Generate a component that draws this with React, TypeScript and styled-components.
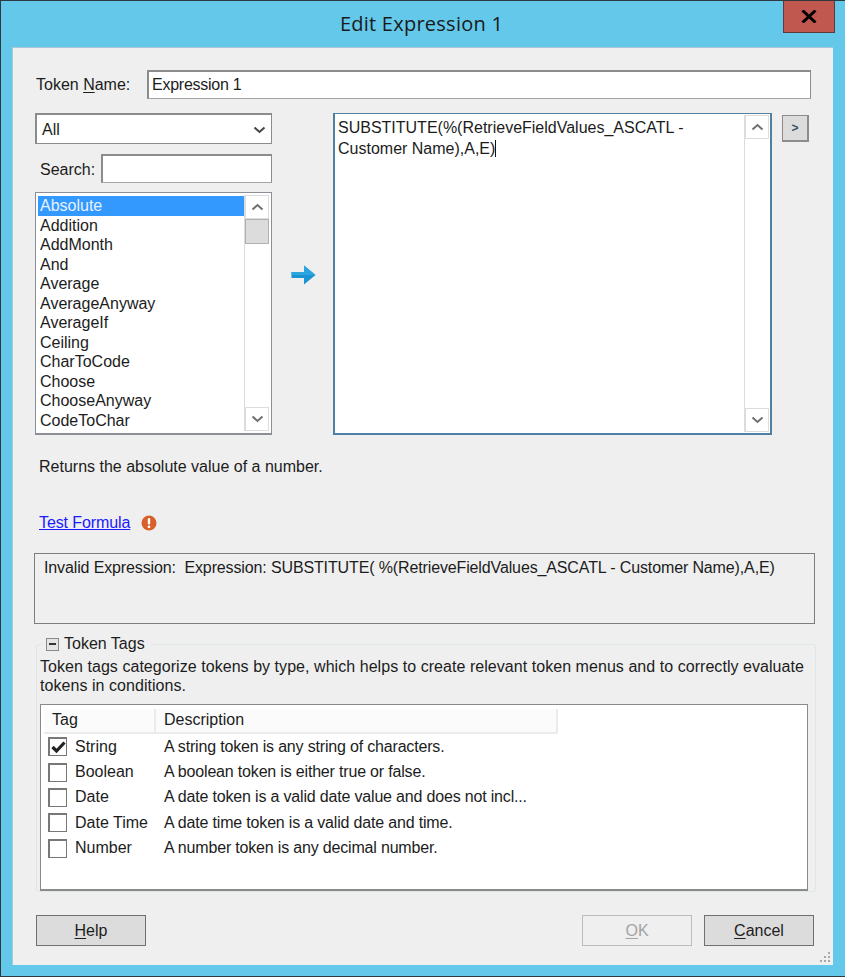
import styled, { createGlobalStyle } from 'styled-components'

const GlobalStyle = createGlobalStyle`
  html, body {
    margin: 0;
    padding: 0;
    background: #63c8ea;
  }
  * {
    box-sizing: border-box;
  }
`

const Window = styled.div`
  width: 845px;
  height: 977px;
  position: relative;
  display: flex;
  flex-direction: column;
  background: #63c8ea;
  border: 1px solid #2f3a40;
  border-right: none;
  font-family: "Liberation Sans", Arial, sans-serif;
  font-size: 16px;
  color: #1c1c1c;
`

const TitleBar = styled.div`
  height: 46px;
  flex: none;
  display: flex;
  align-items: flex-start;
  justify-content: center;
  padding: 9px 3px 0 0;
  font-family: "Open Sans", "Noto Sans", sans-serif;
  font-size: 20px;
  letter-spacing: 0.25px;
  line-height: 28px;
  color: #1a1a1a;
`

const CloseButton = styled.div`
  position: absolute;
  top: 0;
  left: 782px;
  width: 52px;
  height: 32px;
  display: flex;
  align-items: center;
  justify-content: center;
  background: #c0584f;
  border: 1px solid #5f3a38;
  border-top: none;
`

const Client = styled.div`
  flex: none;
  width: 821px;
  height: 918px;
  margin-left: 11px;
  padding: 22px 19px 0 23px;
  background: #efefef;
  border-top: 1px solid #a9c9d6;
  border-left: 1px solid #a9c9d6;
  position: relative;
`

const NameRow = styled.div`
  display: flex;
  align-items: center;
  justify-content: space-between;
  height: 29px;
  padding-right: 3px;
`

const Label = styled.label`
  line-height: 20px;
`

const SearchLabel = styled(Label)`
  margin-top: 2px;
`

const Key = styled.span`
  text-decoration: underline;
  text-underline-offset: 2px;
`

const TextField = styled.div<{ $width: number }>`
  width: ${p => p.$width}px;
  height: 29px;
  padding: 0 3px;
  display: flex;
  align-items: center;
  background: #fff;
  border: 2px solid #8c8c8c;
  border-right-width: 1px;
  border-bottom: 1px solid #a5a5a5;
  letter-spacing: -0.25px;
  white-space: nowrap;
`

const Columns = styled.div`
  display: flex;
  margin-top: 14px;
  margin-left: -1px;
  height: 322px;
`

const LeftColumn = styled.div`
  width: 237px;
  flex: none;
  display: flex;
  flex-direction: column;
`

const Combo = styled.div`
  height: 31px;
  padding: 2px 5px 0;
  display: flex;
  align-items: center;
  justify-content: space-between;
  background: #fff;
  border: 2px solid #8c8c8c;
  border-right-width: 1px;
  border-bottom-width: 1px;
`

const SearchRow = styled.div`
  display: flex;
  align-items: center;
  justify-content: space-between;
  height: 29px;
  margin-top: 10px;
  padding-left: 5px;
`

const ListBox = styled.div`
  display: flex;
  height: 243px;
  margin-top: 9px;
  padding: 2px;
  background: #fff;
  border: 1px solid #8c9096;
  border-bottom-width: 2px;
`

const ListItems = styled.div`
  flex: 1;
  min-width: 0;
  padding-top: 1px;
  overflow: hidden;
`

const ListItem = styled.div<{ $selected?: boolean }>`
  height: 19.55px;
  line-height: 19px;
  padding-left: 2px;
  white-space: nowrap;
  background: ${p => (p.$selected ? '#3399ff' : 'transparent')};
  color: ${p => (p.$selected ? '#e6f2ff' : 'inherit')};
`

const ScrollBar = styled.div`
  width: 25px;
  flex: none;
  display: flex;
  flex-direction: column;
  background: #fff;
  border-left: 1px solid #dcdcdc;
`

const ScrollButton = styled.div`
  height: 24px;
  flex: none;
  display: flex;
  align-items: center;
  justify-content: center;
  background: #fff;
  border: 1px solid #dcdcdc;
`

const ScrollThumb = styled.div`
  height: 25px;
  flex: none;
  background: #dcdcdc;
  border: 1px solid #b0b0b0;
`

const ScrollTrack = styled.div`
  flex: 1;
`

const ArrowCell = styled.div`
  width: 61px;
  flex: none;
  display: flex;
  align-items: flex-start;
  justify-content: center;
  padding: 152px 0 0 2px;
`

const Editor = styled.div`
  width: 439px;
  flex: none;
  display: flex;
  padding: 1px;
  background: #fff;
  border: 2px solid #4f7fa3;
  border-top-width: 1px;
`

const EditorText = styled.div`
  flex: 1;
  min-width: 0;
  padding: 2px 0 0 2px;
  line-height: 21px;
`

const Caret = styled.span`
  display: inline-block;
  width: 1px;
  height: 17px;
  vertical-align: -3px;
  background: #111;
`

const SmallButton = styled.div`
  width: 27px;
  height: 27px;
  flex: none;
  margin: 2px 0 0 10px;
  display: flex;
  align-items: center;
  justify-content: center;
  background: #dcdcdc;
  border: 2px solid #8c8c8c;
  border-top-width: 1px;
  border-left-width: 1px;
  font-size: 12px;
  font-weight: 700;
  color: #35506b;
`

const Description = styled.div`
  margin: 22px 0 0 3px;
  line-height: 20px;
`

const TestRow = styled.div`
  display: flex;
  align-items: center;
  gap: 11px;
  margin: 36px 0 0 3px;
  height: 20px;
  letter-spacing: -0.1px;
`

const TestLink = styled.a`
  color: #1a1aff;
  text-decoration: underline;
`

const ErrorBox = styled.div`
  width: 781px;
  height: 71px;
  margin: 20px 0 0 -2px;
  padding: 4px 9px;
  line-height: 20px;
  letter-spacing: -0.13px;
  border: 1px solid #7d7d7d;
  white-space: pre;
`

const Group = styled.fieldset`
  width: 780px;
  height: 258px;
  margin: 10px 0 0 0;
  padding: 0 7px 1px 3px;
  border: 1px solid #dfe6ea;
  border-radius: 3px;
  display: block;
`

const Legend = styled.legend`
  display: flex;
  align-items: center;
  gap: 5px;
  padding: 0 6px 0 4px;
  margin-left: 2px;
  line-height: 20px;
`

const Collapse = styled.span`
  width: 13px;
  height: 13px;
  display: flex;
  align-items: center;
  justify-content: center;
  background: #e4e4e4;
  border: 1px solid #8a8a8a;
  &::before {
    content: '';
    width: 7px;
    height: 2px;
    background: #333;
  }
`

const GroupText = styled.div`
  line-height: 19px;
  margin-top: 3px;
  letter-spacing: 0.05px;
  white-space: pre-line;
`

const TagTable = styled.div`
  height: 187px;
  margin-top: 9px;
  background: #fff;
  border: 1px solid #8a8a8a;
  border-bottom-width: 2px;
`

const HeaderRow = styled.div`
  display: flex;
  height: 29px;
  padding: 4px 0 0 3px;
`

const HeaderCell = styled.div<{ $width: number }>`
  width: ${p => p.$width}px;
  height: 25px;
  padding-left: 8px;
  line-height: 22px;
  background: #fbfbfb;
  border-right: 2px solid #ebebeb;
  border-bottom: 2px solid #ebebeb;
`

const Row = styled.div`
  display: flex;
  align-items: center;
  height: 25.4px;
  white-space: nowrap;
`

const CheckBox = styled.span`
  width: 19px;
  height: 19px;
  margin-left: 7px;
  flex: none;
  display: flex;
  align-items: center;
  justify-content: center;
  background: #fff;
  border: 2px solid #777;
  border-right-width: 1px;
  border-bottom-width: 1px;
`

const TagName = styled.span`
  width: 97px;
  flex: none;
  padding-left: 8px;
`

const TagText = styled.span`
  letter-spacing: -0.18px;
`

const Footer = styled.div`
  display: flex;
  align-items: center;
  justify-content: space-between;
  margin-top: 23px;
`

const FooterRight = styled.div`
  display: flex;
  gap: 12px;
  margin-right: 0;
`

const DialogButton = styled.div<{ $disabled?: boolean }>`
  width: 110px;
  height: 31px;
  display: flex;
  align-items: center;
  justify-content: center;
  background: ${p => (p.$disabled ? '#efefef' : '#dcdcdc')};
  border: 1px solid ${p => (p.$disabled ? '#bcbcbc' : '#707070')};
  color: ${p => (p.$disabled ? '#a3a3a3' : 'inherit')};
`

const Grip = styled.svg`
  position: absolute;
  right: 2px;
  bottom: 2px;
`

const Chevron = ({ down, color = '#707070' }: { down?: boolean; color?: string }) => (
  <svg width="13" height="8" viewBox="0 0 13 8">
    <path d={down ? 'M1.5 1.5 L6.5 6 L11.5 1.5' : 'M1.5 6.5 L6.5 2 L11.5 6.5'} fill="none" stroke={color} strokeWidth="2" />
  </svg>
)

const Scroll = ({ thumb }: { thumb?: boolean }) => (
  <ScrollBar>
    <ScrollButton><Chevron /></ScrollButton>
    {thumb && <ScrollThumb />}
    <ScrollTrack />
    <ScrollButton><Chevron down /></ScrollButton>
  </ScrollBar>
)

const functions = ['Absolute', 'Addition', 'AddMonth', 'And', 'Average', 'AverageAnyway', 'AverageIf', 'Ceiling', 'CharToCode', 'Choose', 'ChooseAnyway', 'CodeToChar']

const tags = [
  { name: 'String', text: 'A string token is any string of characters.', checked: true },
  { name: 'Boolean', text: 'A boolean token is either true or false.' },
  { name: 'Date', text: 'A date token is a valid date value and does not incl...' },
  { name: 'Date Time', text: 'A date time token is a valid date and time.' },
  { name: 'Number', text: 'A number token is any decimal number.' },
]

const App = () => {
  return (
    <Window>
      <GlobalStyle />
      <TitleBar>Edit Expression 1</TitleBar>
      <CloseButton>
        <svg width="16" height="13" viewBox="0 0 16 13">
          <path d="M1.5 0.5 L14.5 12.5 M14.5 0.5 L1.5 12.5" stroke="#000" strokeWidth="3" />
        </svg>
      </CloseButton>
      <Client>
        <NameRow>
          <Label>Token <Key>N</Key>ame:</Label>
          <TextField $width={664}>Expression 1</TextField>
        </NameRow>
        <Columns>
          <LeftColumn>
            <Combo>All <Chevron down color="#444" /></Combo>
            <SearchRow>
              <SearchLabel>Search:</SearchLabel>
              <TextField $width={171} />
            </SearchRow>
            <ListBox>
              <ListItems>
                {functions.map((name, i) => (
                  <ListItem key={name} $selected={i === 0}>{name}</ListItem>
                ))}
              </ListItems>
              <Scroll thumb />
            </ListBox>
          </LeftColumn>
          <ArrowCell>
            <svg width="25" height="20" viewBox="0 0 25 20">
              <path d="M0.5 7 H13 V0.5 L24.5 10 L13 19.5 V13 H0.5 Z" fill="#1a94d2" />
              <path d="M13 0.5 L24.5 10 H0.5 V7 H13 Z" fill="#2aa5e0" />
            </svg>
          </ArrowCell>
          <Editor>
            <EditorText>
              SUBSTITUTE(%(RetrieveFieldValues_ASCATL - Customer Name),A,E)<Caret />
            </EditorText>
            <Scroll />
          </Editor>
          <SmallButton>&gt;</SmallButton>
        </Columns>
        <Description>Returns the absolute value of a number.</Description>
        <TestRow>
          <TestLink href="#">Test Formula</TestLink>
          <svg width="16" height="16" viewBox="0 0 16 16">
            <circle cx="8" cy="8" r="7.5" fill="#d9602a" />
            <rect x="6.8" y="3" width="2.4" height="6.5" rx="1" fill="#fff" />
            <circle cx="8" cy="11.8" r="1.4" fill="#fff" />
          </svg>
        </TestRow>
        <ErrorBox>Invalid Expression:  Expression: SUBSTITUTE( %(RetrieveFieldValues_ASCATL - Customer Name),A,E)</ErrorBox>
        <Group>
          <Legend><Collapse />Token Tags</Legend>
          <GroupText>
            {'Token tags categorize tokens by type, which helps to create relevant token menus and to correctly evaluate\ntokens in conditions.'}
          </GroupText>
          <TagTable>
            <HeaderRow>
              <HeaderCell $width={112}>Tag</HeaderCell>
              <HeaderCell $width={402}>Description</HeaderCell>
            </HeaderRow>
            {tags.map(tag => (
              <Row key={tag.name}>
                <CheckBox>
                  {tag.checked && (
                    <svg width="15" height="13" viewBox="0 0 15 13">
                      <path d="M1.5 6 L5.5 10 L13.5 1.5" fill="none" stroke="#222" strokeWidth="3.2" />
                    </svg>
                  )}
                </CheckBox>
                <TagName>{tag.name}</TagName>
                <TagText>{tag.text}</TagText>
              </Row>
            ))}
          </TagTable>
        </Group>
        <Footer>
          <DialogButton><span><Key>H</Key>elp</span></DialogButton>
          <FooterRight>
            <DialogButton $disabled><span><Key>O</Key>K</span></DialogButton>
            <DialogButton><span><Key>C</Key>ancel</span></DialogButton>
          </FooterRight>
        </Footer>
        <Grip width="13" height="13" viewBox="0 0 13 13" fill="#a8a8a8">
          <rect x="10" y="2" width="2" height="2" />
          <rect x="6" y="6" width="2" height="2" />
          <rect x="10" y="6" width="2" height="2" />
          <rect x="2" y="10" width="2" height="2" />
          <rect x="6" y="10" width="2" height="2" />
          <rect x="10" y="10" width="2" height="2" />
        </Grip>
      </Client>
    </Window>
  )
}

export default App
